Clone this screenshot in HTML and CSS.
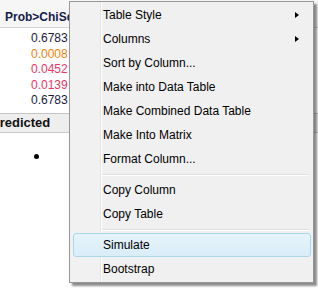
FILE: index.html
```html
<!DOCTYPE html>
<html lang="en">
<head>
    <meta charset="UTF-8">
    <title>Report menu</title>
    <link rel="stylesheet" href="styles.css">
</head>
<body>
    <div class="report">
        <div class="table-head">Prob&gt;ChiSq</div>
        <div class="table-body">
            <div class="val">0.6783</div>
            <div class="val warn">0.0008<span class="star">*</span></div>
            <div class="val alert">0.0452<span class="star">*</span></div>
            <div class="val alert">0.0139<span class="star">*</span></div>
            <div class="val">0.6783</div>
        </div>
        <div class="outline-head">Predicted</div>
        <div class="plot">
            <span class="dot"></span>
        </div>
    </div>

    <div class="menu">
        <div class="item">Table Style<span class="arrow"></span></div>
        <div class="item">Columns<span class="arrow"></span></div>
        <div class="item">Sort by Column...</div>
        <div class="item">Make into Data Table</div>
        <div class="item">Make Combined Data Table</div>
        <div class="item">Make Into Matrix</div>
        <div class="item">Format Column...</div>
        <div class="sep"></div>
        <div class="item">Copy Column</div>
        <div class="item">Copy Table</div>
        <div class="sep"></div>
        <div class="item hover">Simulate</div>
        <div class="item">Bootstrap</div>
    </div>
</body>
</html>
```

FILE: styles.css
```css
body {
    margin: 0;
    width: 318px;
    height: 292px;
    overflow: hidden;
    background-color: #fff;
    font-family: "Liberation Sans", Arial, sans-serif;
    position: relative;
}

.report {
    display: flex;
    flex-direction: column;
}

.table-head {
    height: 28px;
    box-sizing: border-box;
    padding: 10px 0 0 5px;
    background-color: #f6f6f6;
    border-bottom: 1px solid #d6d6d6;
    font-size: 12px;
    font-weight: bold;
    color: #13204a;
}

.table-body {
    padding: 3px 0 4px 31px;
    border-bottom: 1px solid #c4c4c4;
}

.val {
    height: 15.5px;
    line-height: 15.5px;
    font-size: 12px;
    color: #1a1a3c;
}

.warn {
    color: #f0820a;
}

.alert {
    color: #ee3563;
}

.star {
    margin-left: 1px;
}

.outline-head {
    height: 18px;
    line-height: 18px;
    margin-left: -9px;
    background-color: #eeeeee;
    border-bottom: 1px solid #c8c8c8;
    font-size: 13px;
    font-weight: bold;
    color: #111;
}

.plot {
    height: 140px;
    padding: 21px 0 0 34px;
}

.dot {
    display: block;
    width: 5px;
    height: 5px;
    border-radius: 50%;
    background-color: #000;
}

/* context menu floating over the report */
.menu {
    position: absolute;
    left: 69px;
    top: 1px;
    width: 243px;
    padding: 1px 0;
    background-color: #f0f0f0;
    background-image: linear-gradient(to right, #f1f1f1 30px, #e2e3e3 30px, #e2e3e3 31px, #fff 31px, #fff 32px, transparent 32px);
    border: 1px solid #979797;
    box-shadow: 3px 3px 2px rgba(0, 0, 0, 0.45);
}

.item {
    position: relative;
    height: 24px;
    line-height: 24px;
    padding-left: 31px;
    margin: 0 2px;
    font-size: 12px;
    color: #000;
}

.item.hover {
    margin: 0 2px 0 3px;
    padding-left: 29px;
    box-sizing: border-box;
    line-height: 22px;
    border: 1px solid #a9d8ec;
    border-radius: 3px;
    background: linear-gradient(to bottom, #e6f3fb, #d9edf8);
}

.arrow {
    position: absolute;
    right: 12px;
    top: 9px;
    width: 0;
    height: 0;
    border-top: 3.5px solid transparent;
    border-bottom: 3.5px solid transparent;
    border-left: 4px solid #000;
}

.sep {
    height: 7px;
    margin-left: 32px;
    margin-right: 4px;
    background: linear-gradient(to bottom, transparent 3px, #e0e0e0 3px, #e0e0e0 4px, #fff 4px, #fff 5px, transparent 5px);
}
```
